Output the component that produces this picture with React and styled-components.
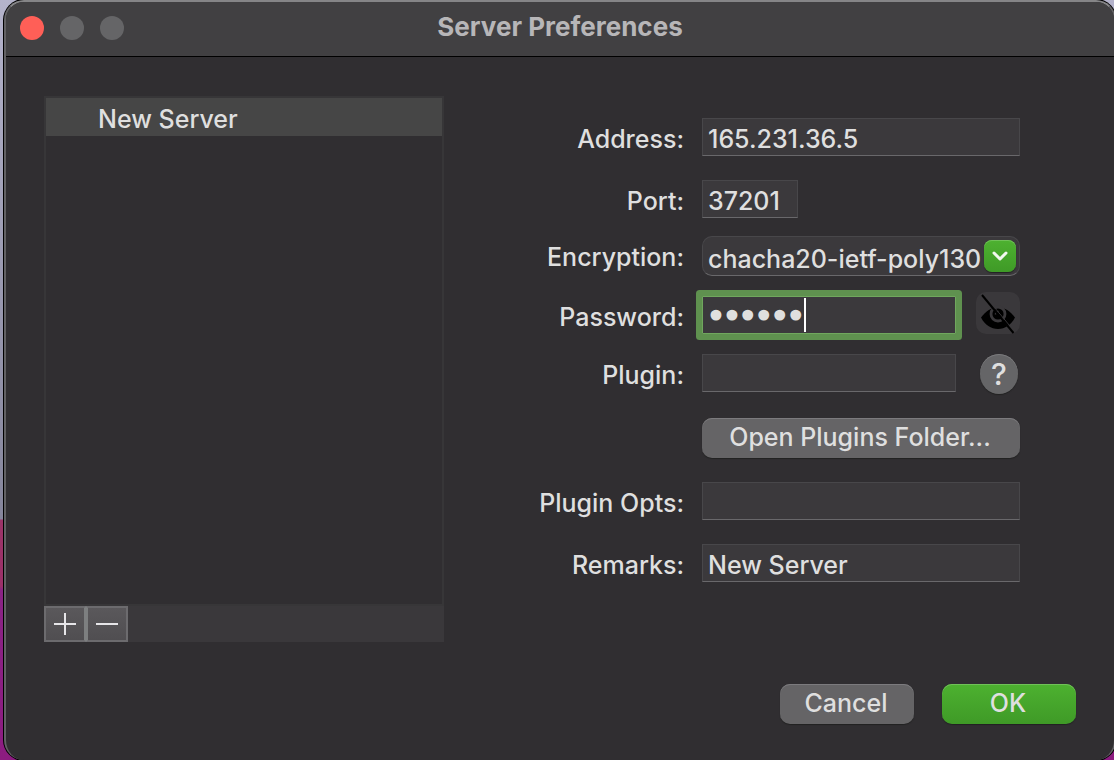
import React, { useState } from 'react';
import styled, { createGlobalStyle, css } from 'styled-components';

const GlobalStyle = createGlobalStyle`
  * {
    box-sizing: border-box;
  }

  body {
    margin: 0;
    overflow: hidden;
    background: linear-gradient(#b4b3cb 0, #85859b 519px, #9b3468 520px, #9b3069 586px, #8a2385 590px, #8c1c80 100%);
    color: #dfdfdf;
    font-family: Inter, "Liberation Sans", sans-serif;
    font-size: 25px;
    font-weight: 500;
  }

  button, input, select {
    margin: 0;
    padding: 0;
    border: 0;
    color: inherit;
    font: inherit;
    outline: none;
  }
`;

const Desktop = styled.div`
  display: flex;
  min-height: 100vh;
  margin-right: -2px;
  padding-left: 4px;
`;

const Window = styled.div`
  flex: 1;
  display: flex;
  flex-direction: column;
  border: 2px solid #626164;
  border-top-color: #858587;
  border-bottom: 0;
  border-radius: 20px;
  background: #302e31;
  box-shadow: 0 0 0 1px #000;
  overflow: hidden;
`;

const TitleBar = styled.header`
  display: grid;
  grid-template-columns: 1fr auto 1fr;
  align-items: center;
  height: 55px;
  padding: 0 14px 2px;
  border-bottom: 1px solid #000;
  background: #414042;
`;

const Lights = styled.div`
  display: flex;
  gap: 16px;
`;

const Light = styled.button`
  width: 24px;
  height: 24px;
  border-radius: 50%;
  background: ${({ $color }) => $color || '#656567'};
`;

const Title = styled.h1`
  margin: 0;
  padding-bottom: 2px;
  color: #b7b6b8;
  font-size: 26px;
  font-weight: 700;
  line-height: 32px;
`;

const Content = styled.main`
  display: flex;
  padding: 39px 94px 0 38px;
`;

const Sidebar = styled.section`
  flex: 0 0 400px;
`;

const ServerList = styled.ul`
  height: 510px;
  margin: 0;
  padding: 0;
  border: 2px solid #373638;
  list-style: none;
`;

const ServerItem = styled.li`
  height: 38px;
  padding-left: 52px;
  background: #464646;
  line-height: 42px;
`;

const ListTools = styled.div`
  display: flex;
  height: 36px;
  background: #3a383b;
`;

const ToolButton = styled.button`
  display: flex;
  align-items: center;
  justify-content: center;
  width: 42px;
  border: 2px solid #6c6b6e;
  background: linear-gradient(#5a585b, #504e51);

  &:first-child {
    border-right-color: #7d7f80;
  }

  & + & {
    border-left-color: #7d7f80;
  }
`;

const Form = styled.form`
  flex: 1;
  padding-top: 22px;
`;

const Row = styled.div`
  display: grid;
  grid-template-columns: 240px 1fr;
  column-gap: 18px;
  align-items: start;
  margin-top: ${({ $space }) => $space || 0}px;
`;

const Label = styled.label`
  height: 38px;
  padding-top: 2px;
  line-height: 38px;
  text-align: right;
`;

const Controls = styled.div`
  display: flex;
  align-items: flex-start;
`;

const fieldStyle = css`
  width: 100%;
  border: 1px solid #48474a;
  border-bottom-color: #69686b;
  background: #3b393c;
`;

const Field = styled.input`
  ${fieldStyle}
  width: ${({ $width }) => $width || '100%'};
  min-width: 0;
  height: 38px;
  padding: 4px 5px 0;
`;

const SelectBox = styled.div`
  position: relative;
  width: 100%;
`;

const Select = styled.select`
  ${fieldStyle}
  display: block;
  height: 40px;
  padding: 6px 38px 0 5px;
  border-radius: 10px;
  appearance: none;
`;

const SelectArrow = styled.span`
  position: absolute;
  top: 4px;
  right: 4px;
  display: flex;
  align-items: center;
  justify-content: center;
  width: 32px;
  height: 32px;
  border-radius: 8px;
  background: linear-gradient(#4db130, #3f9a27);
  box-shadow: inset 0 1px #70c158, 0 1px 1px #222;
  pointer-events: none;
`;

const PasswordBox = styled.div`
  position: relative;
  flex: 1;
`;

const PasswordField = styled(Field)`
  display: block;
  padding: 1px 5px 0;
  border: 1px solid #70a75e;
  border-radius: 1px;
  box-shadow: 0 0 0 6px #5f914f;
  caret-color: transparent;
  font-family: "DejaVu Sans", sans-serif;
  font-size: 27px;
  font-weight: 400;
  -webkit-text-stroke: 3px #dfdfdf;
`;

const Caret = styled.span`
  position: absolute;
  top: 2px;
  left: 102px;
  width: 2px;
  height: 34px;
  background: #fff;
`;

const EyeButton = styled.button`
  display: flex;
  width: 44px;
  height: 42px;
  margin: -4px 0 0 20px;
  border-radius: 10px;
  background: #3a383b;
`;

const HelpButton = styled.button`
  flex: none;
  width: 38px;
  height: 40px;
  margin: 0 2px 0 24px;
  border-radius: 50%;
  background: #656567;
  box-shadow: inset 0 1px #79797b, 0 1px 1px #222;
  font-size: 30px;
  line-height: 40px;
`;

const PushButton = styled.button`
  width: ${({ $wide }) => ($wide ? '100%' : '134px')};
  height: 40px;
  padding: 0 2px 2px 0;
  border-radius: 10px;
  background: ${({ $primary }) => ($primary ? 'linear-gradient(#4db130, #3f9a27)' : '#656466')};
  box-shadow: inset 0 1px ${({ $primary }) => ($primary ? '#70c158' : '#7c7b7e')}, 0 1px 1px #222;
`;

const Footer = styled.footer`
  display: flex;
  justify-content: flex-end;
  gap: 28px;
  padding: 42px 38px 36px;
`;

const PlusIcon = () => (
  <svg width="22" height="22" viewBox="0 0 22 22" stroke="#e6e5e8" strokeWidth="2" aria-hidden="true">
    <path d="M0 11h22M11 0v22" />
  </svg>
);

const MinusIcon = () => (
  <svg width="22" height="22" viewBox="0 0 22 22" stroke="#e6e5e8" strokeWidth="2" aria-hidden="true">
    <path d="M0 11h22" />
  </svg>
);

const ChevronIcon = () => (
  <svg width="16" height="12" viewBox="0 0 16 12" fill="none" stroke="#f2f8ef" strokeWidth="3" strokeLinecap="round" strokeLinejoin="round" aria-hidden="true">
    <path d="M2 3l6 6 6-6" />
  </svg>
);

const EyeIcon = () => (
  <svg width="44" height="42" viewBox="0 0 44 42" fill="none" aria-hidden="true">
    <path d="M5 25.500C10 19 15 15.500 22 15.500s12 3.500 17 10C35 33 29 37 22 37S9 33 5 25.500z" fill="#000" />
    <circle cx="22" cy="22" r="7" stroke="#3a383b" strokeWidth="2.800" />
    <path d="M22.500 19.500a3 3 0 0 0-3 3" stroke="#3a383b" strokeWidth="1.500" />
    <path d="M8.500 3.500l30 36" stroke="#3a383b" strokeWidth="1" />
    <path d="M6 3l31.500 38" stroke="#000" strokeWidth="2" />
  </svg>
);

const App = () => {
  const [server, setServer] = useState({
    address: '165.231.36.5',
    port: '37201',
    method: 'chacha20-ietf-poly1305',
    password: 'secret',
    plugin: '',
    pluginOpts: '',
    remarks: 'New Server',
  });

  const bind = (name) => ({
    id: name,
    value: server[name],
    onChange: (e) => setServer({ ...server, [name]: e.target.value }),
  });

  return (
    <>
      <GlobalStyle />
      <Desktop>
        <Window>
          <TitleBar>
            <Lights>
              <Light $color="#ff5f57" aria-label="Close" />
              <Light aria-label="Minimize" />
              <Light aria-label="Zoom" />
            </Lights>
            <Title>Server Preferences</Title>
          </TitleBar>

          <Content>
            <Sidebar>
              <ServerList>
                <ServerItem>{server.remarks}</ServerItem>
              </ServerList>
              <ListTools>
                <ToolButton aria-label="Add server"><PlusIcon /></ToolButton>
                <ToolButton aria-label="Remove server"><MinusIcon /></ToolButton>
              </ListTools>
            </Sidebar>

            <Form id="server-form" onSubmit={(e) => e.preventDefault()}>
              <Row>
                <Label htmlFor="address">Address:</Label>
                <Field {...bind('address')} />
              </Row>
              <Row $space={24}>
                <Label htmlFor="port">Port:</Label>
                <Field $width="96px" {...bind('port')} />
              </Row>
              <Row $space={18}>
                <Label htmlFor="method">Encryption:</Label>
                <SelectBox>
                  <Select {...bind('method')}>
                    <option>chacha20-ietf-poly1305</option>
                    <option>aes-256-gcm</option>
                    <option>aes-128-gcm</option>
                  </Select>
                  <SelectArrow><ChevronIcon /></SelectArrow>
                </SelectBox>
              </Row>
              <Row $space={20}>
                <Label htmlFor="password">Password:</Label>
                <Controls>
                  <PasswordBox>
                    <PasswordField type="password" {...bind('password')} />
                    <Caret />
                  </PasswordBox>
                  <EyeButton type="button" aria-label="Show password"><EyeIcon /></EyeButton>
                </Controls>
              </Row>
              <Row $space={20}>
                <Label htmlFor="plugin">Plugin:</Label>
                <Controls>
                  <Field {...bind('plugin')} />
                  <HelpButton type="button" aria-label="Plugin help">?</HelpButton>
                </Controls>
              </Row>
              <Row $space={24}>
                <span />
                <PushButton type="button" $wide>Open Plugins Folder...</PushButton>
              </Row>
              <Row $space={24}>
                <Label htmlFor="pluginOpts">Plugin Opts:</Label>
                <Field {...bind('pluginOpts')} />
              </Row>
              <Row $space={24}>
                <Label htmlFor="remarks">Remarks:</Label>
                <Field {...bind('remarks')} />
              </Row>
            </Form>
          </Content>

          <Footer>
            <PushButton type="button">Cancel</PushButton>
            <PushButton type="submit" form="server-form" $primary>OK</PushButton>
          </Footer>
        </Window>
      </Desktop>
    </>
  );
};

export default App;
